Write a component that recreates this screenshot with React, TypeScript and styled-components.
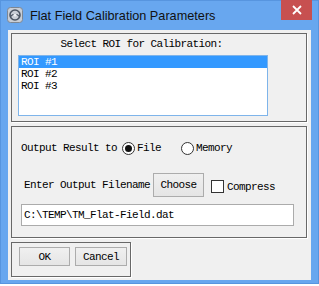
import React, {useState} from 'react';
import styled, {createGlobalStyle} from 'styled-components';

const GlobalStyle = createGlobalStyle`
html, body {
margin: 0;
padding: 0;
background: #ffffff;
}
`;

const MONO = `'Liberation Mono', 'DejaVu Sans Mono', monospace`;

const Window = styled.div`
width: 319px;
height: 284px;
box-sizing: border-box;
background: #68a7ef;
border: 1px solid #5795df;
display: flex;
flex-direction: column;
`;

const TitleBar = styled.div`
height: 29px;
display: flex;
align-items: flex-start;
padding-left: 6px;
`;

const TitleIcon = styled.svg`
width: 16px;
height: 16px;
margin-top: 6px;
flex-shrink: 0;
`;

const Title = styled.span`
font-family: 'Liberation Sans', Arial, sans-serif;
font-size: 12.7px;
color: #111;
margin-left: 7px;
line-height: 30px;
flex: 1;
`;

const CloseButton = styled.button`
width: 31px;
height: 20px;
margin-right: 6px;
margin-top: -1px;
border: none;
padding: 0;
background: #c75050;
display: flex;
align-items: center;
justify-content: center;
`;

const Body = styled.div`
flex: 1;
margin: 0 7px 4px 7px;
background: #f0f0f0;
padding: 3px 4px 3px 3px;
display: flex;
flex-direction: column;
gap: 4px;
font-family: ${MONO};
font-size: 11px;
letter-spacing: -0.6px;
color: #000;
`;

const Panel = styled.div`
border: 1px solid #686868;
box-shadow: 1px 1px 0 #ffffff;
display: flex;
flex-direction: column;
`;

const RoiPanel = styled(Panel)`
height: 89px;
box-sizing: border-box;
padding: 3px 6px 0 6px;
`;

const Caption = styled.div`
text-align: center;
line-height: 14px;
height: 14px;
margin-bottom: 4px;
padding-right: 35px;
`;

const ListBox = styled.div`
width: 250px;
height: 61px;
box-sizing: border-box;
border: 1px solid #7eb4ea;
background: #ffffff;
`;

const ListItem = styled.div<{ $selected?: boolean }>`
height: 12px;
line-height: 12px;
padding-left: 2px;
background: ${p => p.$selected ? '#3399ff' : 'transparent'};
color: ${p => p.$selected ? '#ffffff' : '#000000'};
`;

const OutputPanel = styled(Panel)`
height: 112px;
box-sizing: border-box;
padding: 12px 9px 0 9px;
`;

const Row = styled.div<{ $indent?: number }>`
display: flex;
align-items: center;
padding-left: ${p => p.$indent || 0}px;
`;

const RadioRow = styled(Row)`
height: 18px;
`;

const Radio = styled.span<{ $checked?: boolean }>`
width: 13px;
height: 13px;
box-sizing: border-box;
border-radius: 50%;
border: 1px solid #333333;
background: #ffffff;
margin: 0 2px 0 5px;
display: flex;
align-items: center;
justify-content: center;
&::after {
content: '';
width: 7px;
height: 7px;
border-radius: 50%;
background: ${p => p.$checked ? '#111111' : 'transparent'};
}
`;

const RadioLabel = styled.span<{ $gap?: number }>`
margin-right: ${p => p.$gap || 0}px;
`;

const FileRow = styled(Row)`
margin-top: 16px;
height: 24px;
`;

const Button = styled.button<{ $w: number; $h: number }>`
width: ${p => p.$w}px;
height: ${p => p.$h}px;
box-sizing: border-box;
border: 1px solid #acacac;
background: linear-gradient(#f0f0f0, #e5e5e5);
font-family: ${MONO};
font-size: 11px;
letter-spacing: -0.6px;
color: #000;
padding: 0;
`;

const CheckBox = styled.span`
width: 13px;
height: 13px;
box-sizing: border-box;
border: 1px solid #333333;
background: #ffffff;
margin: 2px 3px 0 7px;
`;

const CheckLabel = styled.span`
margin-top: 3px;
`;

const PathField = styled.div`
margin-top: 7px;
width: 273px;
height: 22px;
box-sizing: border-box;
border: 1px solid #ababab;
background: #ffffff;
line-height: 20px;
padding-left: 2px;
`;

const ButtonPanel = styled(Panel)`
flex-direction: row;
align-self: flex-start;
gap: 5px;
padding: 4px 3px 10px 7px;
`;

const rois = ['ROI #1', 'ROI #2', 'ROI #3'];

const App = () => {
    const [selected, setSelected] = useState(0);
    const [target, setTarget] = useState<'file' | 'memory'>('file');

    return (
        <>
            <GlobalStyle/>
            <Window>
                <TitleBar>
                    <TitleIcon viewBox="0 0 16 16">
                        <rect x="0.5" y="0.5" width="15" height="15" rx="3" fill="#c9ced6" stroke="#7d8794"/>
                        <circle cx="8" cy="8" r="5" fill="none" stroke="#4b5563" strokeWidth="1.6"/>
                        <path d="M3.5 9.5 C6 6.5 10 6.5 12.5 9.5" fill="none" stroke="#4b5563" strokeWidth="1.2"/>
                        <circle cx="8" cy="8" r="1.6" fill="#eef1f5"/>
                    </TitleIcon>
                    <Title>Flat Field Calibration Parameters</Title>
                    <CloseButton>
                        <svg width="10" height="10" viewBox="0 0 10 10">
                            <path d="M1 1 L9 9 M9 1 L1 9" stroke="#ffffff" strokeWidth="1.8"/>
                        </svg>
                    </CloseButton>
                </TitleBar>
                <Body>
                    <RoiPanel>
                        <Caption>Select ROI for Calibration:</Caption>
                        <ListBox>
                            {rois.map((r, i) => (
                                <ListItem key={r} $selected={i === selected} onClick={() => setSelected(i)}>
                                    {r}
                                </ListItem>
                            ))}
                        </ListBox>
                    </RoiPanel>
                    <OutputPanel>
                        <RadioRow>
                            <span>Output Result to</span>
                            <Radio $checked={target === 'file'} onClick={() => setTarget('file')}/>
                            <RadioLabel $gap={15}>File</RadioLabel>
                            <Radio $checked={target === 'memory'} onClick={() => setTarget('memory')}/>
                            <RadioLabel>Memory</RadioLabel>
                        </RadioRow>
                        <FileRow $indent={3}>
                            <span>Enter Output Filename</span>
                            <Button $w={51} $h={24} style={{marginLeft: 3}}>Choose</Button>
                            <CheckBox/>
                            <CheckLabel>Compress</CheckLabel>
                        </FileRow>
                        <PathField>C:\TEMP\TM_Flat-Field.dat</PathField>
                    </OutputPanel>
                    <ButtonPanel>
                        <Button $w={51} $h={19}>OK</Button>
                        <Button $w={52} $h={19}>Cancel</Button>
                    </ButtonPanel>
                </Body>
            </Window>
        </>
    );
};

export default App;
